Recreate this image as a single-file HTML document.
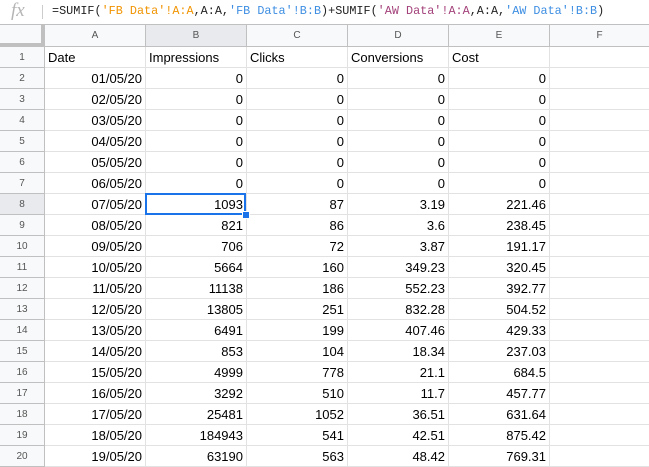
<!DOCTYPE html>
<html><head><meta charset="utf-8"><style>
body{margin:0;width:649px;height:467px;overflow:hidden;background:#fff;font-family:"Liberation Sans",Arial,sans-serif;position:relative}
.fb{position:absolute;left:0;top:0;width:649px;height:24px;background:#fff;border-bottom:1px solid #c0c0c0}
.fx{position:absolute;left:11px;top:0px;font-family:"Liberation Serif",serif;font-style:italic;font-size:19px;color:#b5b5b5}
.sep{position:absolute;left:42px;top:5px;width:1px;height:14px;background:#ccc}
.ft{position:absolute;left:52px;top:4px;font-family:"Liberation Mono",monospace;font-size:11.8px;color:#222;white-space:pre}
.o{color:#f09300}.b{color:#3d8ee2}.p{color:#a3417a}
.hdr{position:absolute;top:25px;height:22px;background:#f8f9fa;border-right:1px solid #c0c0c0;border-bottom:1px solid #c0c0c0;box-sizing:border-box;font-size:10px;color:#555;text-align:center;line-height:22px}
.rh{position:absolute;left:0;width:45px;height:21px;background:#f8f9fa;border-right:1px solid #c0c0c0;border-bottom:1px solid #c0c0c0;box-sizing:border-box;font-size:10px;color:#555;text-align:center;line-height:21px}
.c{position:absolute;height:21px;border-right:1px solid #e2e2e2;border-bottom:1px solid #e2e2e2;box-sizing:border-box;font-size:13px;color:#000;line-height:21px;padding:0 3px;white-space:nowrap;overflow:hidden}
.r{text-align:right}
</style></head><body>
<div class="fb"><span class="fx">fx</span><div class="sep"></div><div class="ft">=SUMIF(<span class="o">'FB Data'!A:A</span>,A:A,<span class="b">'FB Data'!B:B</span>)+SUMIF(<span class="p">'AW Data'!A:A</span>,A:A,<span class="b">'AW Data'!B:B</span>)</div></div>
<div id="g"></div>
<script>
var cols=[44,145,246,347,448,549,649],L="ABCDEF",h="";
h+='<div class="hdr" style="left:0;width:45px;border-right:4px solid #c0c0c0;border-bottom:4px solid #c0c0c0"></div>';
for(var i=0;i<6;i++){h+='<div class="hdr" style="left:'+(cols[i]+1)+'px;width:'+(cols[i+1]-cols[i])+'px;'+(i==1?'background:#e8eaed;':'')+'">'+L[i]+'</div>';}
var d=[["Date","Impressions","Clicks","Conversions","Cost"],
["01/05/20","0","0","0","0"],["02/05/20","0","0","0","0"],["03/05/20","0","0","0","0"],["04/05/20","0","0","0","0"],["05/05/20","0","0","0","0"],["06/05/20","0","0","0","0"],
["07/05/20","1093","87","3.19","221.46"],["08/05/20","821","86","3.6","238.45"],["09/05/20","706","72","3.87","191.17"],["10/05/20","5664","160","349.23","320.45"],["11/05/20","11138","186","552.23","392.77"],["12/05/20","13805","251","832.28","504.52"],["13/05/20","6491","199","407.46","429.33"],["14/05/20","853","104","18.34","237.03"],["15/05/20","4999","778","21.1","684.5"],["16/05/20","3292","510","11.7","457.77"],["17/05/20","25481","1052","36.51","631.64"],["18/05/20","184943","541","42.51","875.42"],["19/05/20","63190","563","48.42","769.31"]];
for(var r=0;r<20;r++){var y=47+r*21;
h+='<div class="rh" style="top:'+y+'px;'+(r==7?'background:#e8eaed;':'')+'">'+(r+1)+'</div>';
for(var c=0;c<6;c++){var t=c<5?d[r][c]:"";h+='<div class="c'+(r>0?' r':'')+'" style="left:'+(cols[c]+1)+'px;top:'+y+'px;width:'+(cols[c+1]-cols[c])+'px">'+t+'</div>';}}
h+='<div style="position:absolute;left:145px;top:193px;width:101px;height:22px;border:2px solid #1a73e8;box-sizing:border-box"></div>';
h+='<div style="position:absolute;left:242px;top:211px;width:6px;height:6px;background:#1a73e8;border:1px solid #fff"></div>';
document.getElementById("g").innerHTML=h;
</script>
</body></html>
